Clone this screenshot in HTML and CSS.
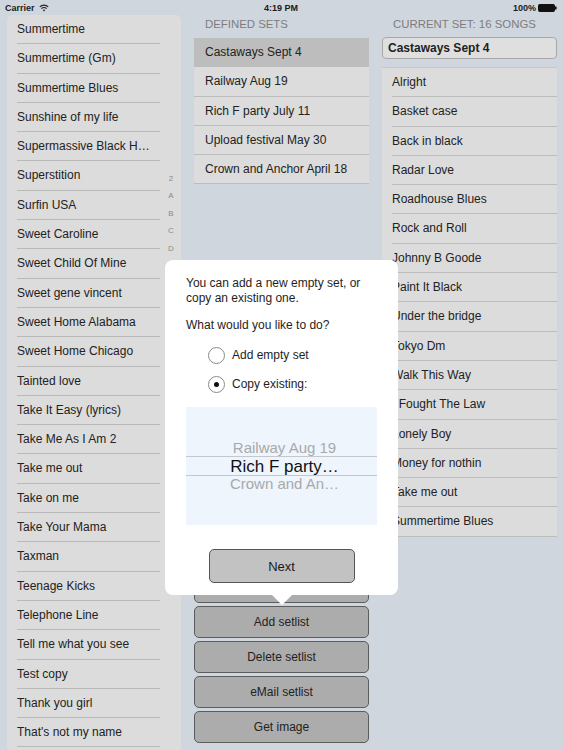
FILE: index.html
```html
<!DOCTYPE html>
<html lang="en">
<head>
    <meta charset="UTF-8">
    <meta name="viewport" content="width=device-width, initial-scale=1.0">
    <title>Setlists</title>
    <link rel="stylesheet" href="styles.css">
</head>
<body>
    <div class="status-bar">
        <div class="status-left">
            <span>Carrier</span>
            <svg class="wifi" width="10" height="8" viewBox="0 0 10 8">
                <path d="M0.8 2.9 A6 6 0 0 1 9.2 2.9" fill="none" stroke="#222" stroke-width="1.2"/>
                <path d="M2.4 4.6 A3.7 3.7 0 0 1 7.6 4.6" fill="none" stroke="#222" stroke-width="1.2"/>
                <path d="M3.8 6.1 L5 7.5 L6.2 6.1 A1.7 1.7 0 0 0 3.8 6.1 Z" fill="#222"/>
            </svg>
        </div>
        <div class="status-time">4:19 PM</div>
        <div class="status-right">
            <span>100%</span>
            <svg width="19" height="8" viewBox="0 0 19 8">
                <rect x="0.5" y="0.5" width="16" height="7" rx="1" fill="#111" stroke="#111"/>
                <rect x="17" y="2.5" width="1.6" height="3" fill="#111"/>
            </svg>
        </div>
    </div>

    <div class="main">
        <!-- Song library -->
        <div class="songs">
            <ul class="song-list">
                <li>Summertime</li>
                <li>Summertime (Gm)</li>
                <li>Summertime Blues</li>
                <li>Sunshine of my life</li>
                <li>Supermassive Black H…</li>
                <li>Superstition</li>
                <li>Surfin USA</li>
                <li>Sweet Caroline</li>
                <li>Sweet Child Of Mine</li>
                <li>Sweet gene vincent</li>
                <li>Sweet Home Alabama</li>
                <li>Sweet Home Chicago</li>
                <li>Tainted love</li>
                <li>Take It Easy (lyrics)</li>
                <li>Take Me As I Am 2</li>
                <li>Take me out</li>
                <li>Take on me</li>
                <li>Take Your Mama</li>
                <li>Taxman</li>
                <li>Teenage Kicks</li>
                <li>Telephone Line</li>
                <li>Tell me what you see</li>
                <li>Test copy</li>
                <li>Thank you girl</li>
                <li>That's not my name</li>
            </ul>
            <ul class="section-index">
                <li>2</li><li>A</li><li>B</li><li>C</li><li>D</li><li>E</li><li>F</li>
                <li>G</li><li>H</li><li>I</li><li>J</li><li>K</li><li>L</li><li>M</li>
            </ul>
        </div>

        <!-- Defined sets -->
        <div class="sets">
            <div class="col-header">Defined sets</div>
            <ul class="set-list">
                <li class="selected">Castaways Sept 4</li>
                <li>Railway Aug 19</li>
                <li>Rich F party July 11</li>
                <li>Upload festival May 30</li>
                <li>Crown and Anchor April 18</li>
            </ul>
            <div class="actions">
                <button>Rename setlist</button>
                <button>Add setlist</button>
                <button>Delete setlist</button>
                <button>eMail setlist</button>
                <button>Get image</button>
            </div>
        </div>

        <!-- Current set -->
        <div class="current">
            <div class="col-header">Current set: 16 songs</div>
            <div class="set-name">Castaways Sept 4</div>
            <ul class="current-list">
                <li>Alright</li>
                <li>Basket case</li>
                <li>Back in black</li>
                <li>Radar Love</li>
                <li>Roadhouse Blues</li>
                <li>Rock and Roll</li>
                <li>Johnny B Goode</li>
                <li>Paint It Black</li>
                <li>Under the bridge</li>
                <li>Tokyo Dm</li>
                <li>Walk This Way</li>
                <li>I Fought The Law</li>
                <li>Lonely Boy</li>
                <li>Money for nothin</li>
                <li>Take me out</li>
                <li>Summertime Blues</li>
            </ul>
        </div>
    </div>

    <!-- Add set popover -->
    <div class="popover">
        <p>You can add a new empty set, or copy an existing one.</p>
        <p class="question">What would you like to do?</p>
        <label class="radio"><span class="radio-dot"></span>Add empty set</label>
        <label class="radio"><span class="radio-dot checked"></span>Copy existing:</label>
        <div class="picker">
            <div class="picker-row">Railway Aug 19</div>
            <div class="picker-row current-row">Rich F party…</div>
            <div class="picker-row">Crown and An…</div>
        </div>
        <button class="next-btn">Next</button>
    </div>
</body>
</html>
```

FILE: styles.css
```css
/* Setlist screen */
* { box-sizing: border-box; }
body { margin: 0; width: 563px; height: 750px; overflow: hidden; position: relative; background: #d0d6dd; font-family: "Liberation Sans", Arial, sans-serif; color: #222; }
ul { list-style: none; margin: 0; padding: 0; }

.status-bar { height: 14px; display: grid; grid-template-columns: 1fr auto 1fr; align-items: center; padding: 1px 6px 0 5px; font-size: 9px; font-weight: bold; color: #1a1a1a; }
.status-left { display: flex; align-items: center; gap: 4px; }
.status-time { text-align: center; }
.status-right { display: flex; align-items: center; justify-content: flex-end; gap: 2px; }

.main { display: flex; gap: 13px; padding-left: 7px; height: 736px; }

.songs { width: 174px; margin-top: 1px; background: #dcdcdc; border-radius: 5px 5px 0 0; position: relative; overflow: hidden; }
.song-list li { height: 29.3px; line-height: 28px; margin: 0 21px 0 10px; border-bottom: 1px solid #b9b9b9; font-size: 12px; white-space: nowrap; }
.section-index { position: absolute; top: 155px; right: 0; width: 20px; text-align: center; font-size: 8px; color: #8a8a8a; }
.section-index li { height: 17.4px; line-height: 17.4px; }

.col-header { height: 24px; padding: 4px 0 0 11px; font-size: 11.4px; line-height: 13px; text-transform: uppercase; color: #7d7d7d; }

.sets { width: 175px; display: flex; flex-direction: column; }
.set-list { background: #dcdcdc; }
.set-list li { height: 29.3px; line-height: 28px; padding-left: 11px; border-bottom: 1px solid #bcbcbc; font-size: 12px; }
.set-list li.selected { background: #bdbdbd; }
.actions { margin-top: auto; padding-bottom: 7px; display: flex; flex-direction: column; gap: 3px; }
.actions button { height: 32px; background: #acacac; border: 1px solid #5c5c5c; border-radius: 5px; font-family: inherit; font-size: 12px; color: #222; }

.current { width: 175px; }
.set-name { height: 22px; margin-top: -1px; padding-left: 5px; background: #dfdfdf; border: 1px solid #a8a8a8; border-radius: 4px; font-size: 12px; font-weight: bold; line-height: 20px; }
.current-list { margin-top: 8px; background: #dcdcdc; border-top: 1px solid #c6c6c6; }
.current-list li { height: 29.3px; line-height: 28px; margin-left: 10px; border-bottom: 1px solid #bcbcbc; font-size: 12px; }

/* popover */
.popover { position: absolute; left: 165px; top: 260px; width: 233px; height: 335px; background: #fff; border-radius: 8px; padding: 16px 21px 0 21px; font-size: 12px; color: #1e1e1e; }
.popover::after { content: ""; position: absolute; left: 107px; bottom: -10px; border-left: 10px solid transparent; border-right: 10px solid transparent; border-top: 10px solid #fff; }
.popover p { margin: 0; line-height: 15px; }
.popover .question { margin-top: 12px; }
.radio { display: flex; align-items: center; height: 20px; padding-left: 22px; margin-top: 9px; }
.radio:first-of-type { margin-top: 12px; }
.radio-dot { width: 17px; height: 17px; border: 1px solid #8a8a8a; border-radius: 50%; margin-right: 7px; display: flex; align-items: center; justify-content: center; }
.radio-dot.checked::before { content: ""; width: 5px; height: 5px; border-radius: 50%; background: #111; }

.picker { margin-top: 13px; height: 118px; background: #eef5fd; display: flex; flex-direction: column; justify-content: center; padding-left: 6px; text-align: center; }
.picker-row { height: 16px; line-height: 16px; font-size: 15px; color: #a9a9a9; white-space: nowrap; }
.picker-row.current-row { height: 20px; line-height: 20px; font-size: 17px; color: #111; border-top: 1px solid #c4c8cc; border-bottom: 1px solid #c4c8cc; margin-left: -6px; padding-left: 6px; }

.next-btn { display: block; width: 146px; height: 34px; margin: 24px auto 0; background: #c2c2c2; border: 1px solid #555; border-radius: 5px; font-family: inherit; font-size: 13px; color: #1a1a1a; }
```
